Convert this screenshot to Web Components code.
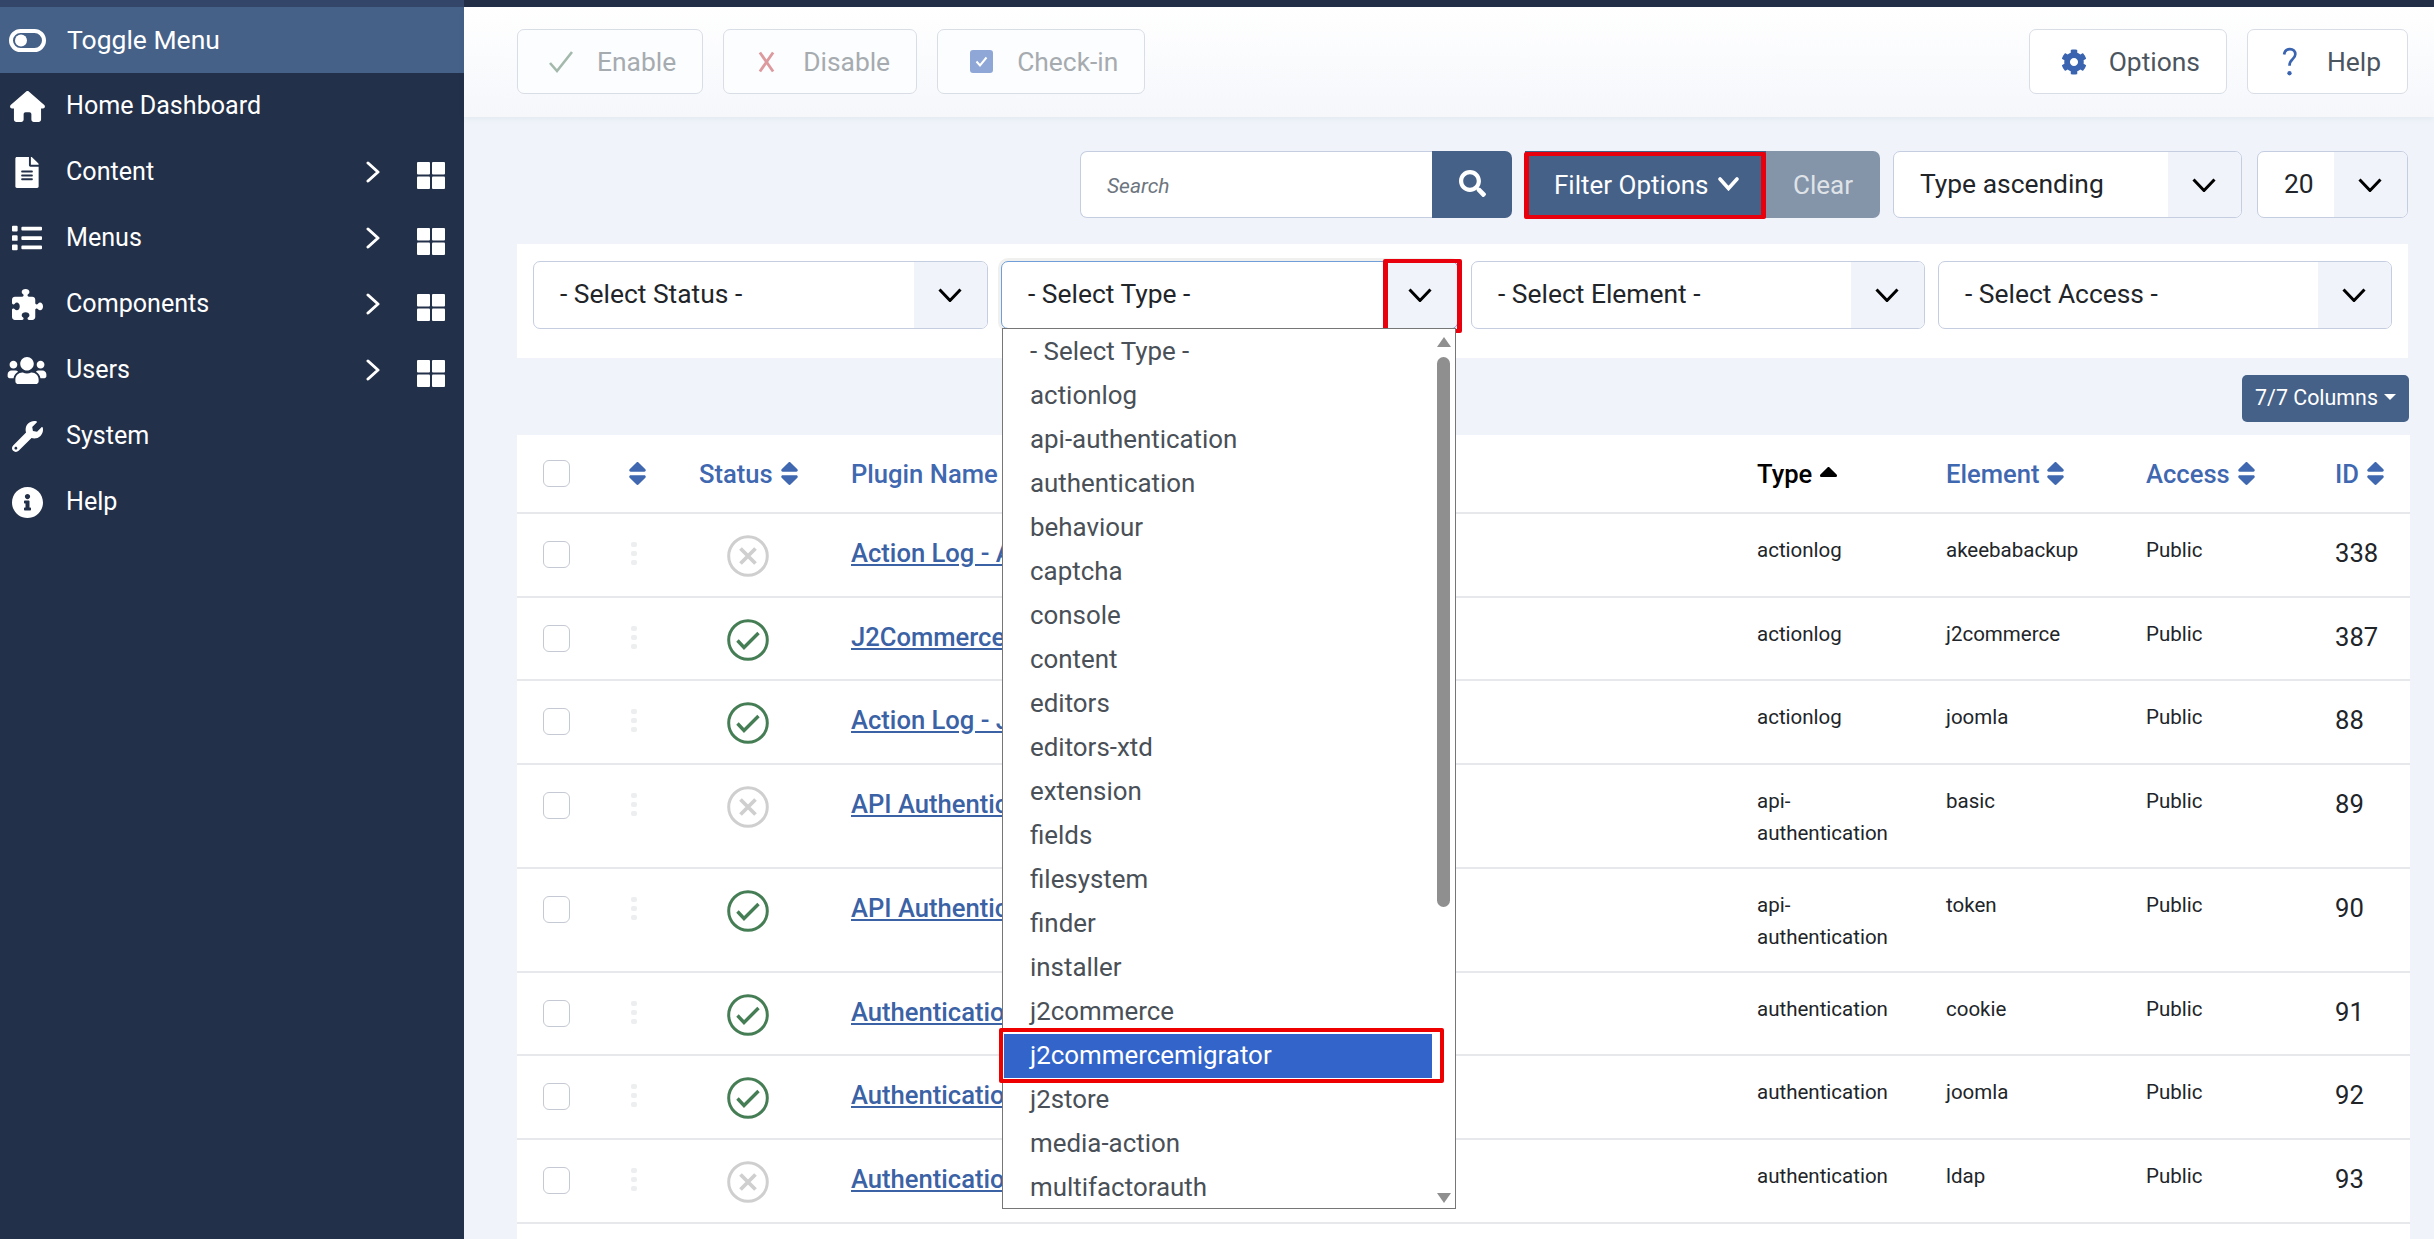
<!DOCTYPE html>
<html lang="en">
<head>
<meta charset="utf-8">
<title>Plugins</title>
<style>
  html, body { margin: 0; height: 1239px; overflow: hidden; background: #f0f4fa; font-family: Roboto, "Noto Sans", sans-serif; }
</style>
</head>
<body>
<app-shell>
  <app-sidebar slot="side">
    <side-item icon="toggle" active>Toggle Menu</side-item>
    <side-item icon="home">Home Dashboard</side-item>
    <side-item icon="file" expand>Content</side-item>
    <side-item icon="list" expand>Menus</side-item>
    <side-item icon="puzzle" expand>Components</side-item>
    <side-item icon="users" expand>Users</side-item>
    <side-item icon="wrench">System</side-item>
    <side-item icon="info">Help</side-item>
  </app-sidebar>

  <tool-bar>
    <tool-button slot="left" icon="check" disabled>Enable</tool-button>
    <tool-button slot="left" icon="times" disabled>Disable</tool-button>
    <tool-button slot="left" icon="checkbox" disabled>Check-in</tool-button>
    <tool-button slot="right" icon="cog">Options</tool-button>
    <tool-button slot="right" icon="question">Help</tool-button>
  </tool-bar>

  <search-tools></search-tools>

  <filter-panel>
    <select-box style="width:455px">- Select Status -</select-box>
    <select-box style="width:457px" focused>- Select Type -<type-listbox slot="list"></type-listbox></select-box>
    <select-box style="width:454px">- Select Element -</select-box>
    <select-box style="width:454px">- Select Access -</select-box>
  </filter-panel>

  <columns-bar>7/7 Columns</columns-bar>

  <!-- names stop where the open dropdown covers them -->
  <plugin-table>
    <plugin-row name="Action Log - A" type="actionlog" element="akeebabackup" num="338"></plugin-row>
    <plugin-row on name="J2Commerce" type="actionlog" element="j2commerce" num="387"></plugin-row>
    <plugin-row on name="Action Log - J" type="actionlog" element="joomla" num="88"></plugin-row>
    <plugin-row name="API Authentic" type="api-authentication" element="basic" num="89"></plugin-row>
    <plugin-row on name="API Authentic" type="api-authentication" element="token" num="90"></plugin-row>
    <plugin-row on name="Authenticatio" type="authentication" element="cookie" num="91"></plugin-row>
    <plugin-row on name="Authenticatio" type="authentication" element="joomla" num="92"></plugin-row>
    <plugin-row name="Authenticatio" type="authentication" element="ldap" num="93"></plugin-row>
  </plugin-table>
</app-shell>

<script>
const ICONS = {
  home: ['0 0 576 512', 'M575.8 255.5c0 18-15 32.1-32 32.1h-32l.7 160.2c0 2.7-.2 5.4-.5 8.1V472c0 22.1-17.9 40-40 40H456c-1.1 0-2.2 0-3.300-.1c-1.400 .1-2.800 .1-4.200 .1H416 392c-22.100 0-40-17.900-40-40V448 384c0-17.700-14.300-32-32-32H256c-17.700 0-32 14.300-32 32v64 24c0 22.100-17.900 40-40 40H160 128.100c-1.500 0-3-.1-4.500-.2c-1.200 .1-2.400 .2-3.600 .2H104c-22.100 0-40-17.900-40-40V360c0-.9 0-1.900 .1-2.800V287.600H32c-18 0-32-14-32-32.100c0-9 3-17 10-24L266.400 8c7-7 15-8 22-8s15 2 21 7L564.800 231.500c8 7 12 15 11 24z'],
  file: ['0 0 384 512', 'M224 136V0H24C10.7 0 0 10.7 0 24v464c0 13.3 10.7 24 24 24h336c13.3 0 24-10.7 24-24V160H248c-13.2 0-24-10.8-24-24zm64 236c0 6.6-5.4 12-12 12H108c-6.6 0-12-5.4-12-12v-8c0-6.6 5.4-12 12-12h168c6.6 0 12 5.4 12 12v8zm0-64c0 6.6-5.4 12-12 12H108c-6.6 0-12-5.4-12-12v-8c0-6.6 5.4-12 12-12h168c6.6 0 12 5.4 12 12v8zm0-72v8c0 6.6-5.4 12-12 12H108c-6.6 0-12-5.4-12-12v-8c0-6.6 5.4-12 12-12h168c6.6 0 12 5.4 12 12zm96-114.1v6.1H256V0h6.1c6.4 0 12.5 2.5 17 7l97.9 98c4.5 4.5 7 10.6 7 16.9z'],
  list: ['0 0 512 512', 'M80 368H16a16 16 0 0 0-16 16v64a16 16 0 0 0 16 16h64a16 16 0 0 0 16-16v-64a16 16 0 0 0-16-16zm0-320H16A16 16 0 0 0 0 64v64a16 16 0 0 0 16 16h64a16 16 0 0 0 16-16V64a16 16 0 0 0-16-16zm0 160H16a16 16 0 0 0-16 16v64a16 16 0 0 0 16 16h64a16 16 0 0 0 16-16v-64a16 16 0 0 0-16-16zm416 176H176a16 16 0 0 0-16 16v32a16 16 0 0 0 16 16h320a16 16 0 0 0 16-16v-32a16 16 0 0 0-16-16zm0-320H176a16 16 0 0 0-16 16v32a16 16 0 0 0 16 16h320a16 16 0 0 0 16-16V80a16 16 0 0 0-16-16zm0 160H176a16 16 0 0 0-16 16v32a16 16 0 0 0 16 16h320a16 16 0 0 0 16-16v-32a16 16 0 0 0-16-16z'],
  puzzle: ['0 0 512 512', 'M192 104.8c0-9.2-5.800-17.300-13.200-22.800C167.200 73.300 160 61.300 160 48c0-26.500 28.700-48 64-48s64 21.500 64 48c0 13.300-7.200 25.300-18.800 34c-7.400 5.500-13.200 13.600-13.200 22.800c0 12.800 10.400 23.200 23.200 23.200H336c26.500 0 48 21.500 48 48v56.800c0 12.800 10.400 23.200 23.200 23.200c9.200 0 17.300-5.800 22.800-13.200c8.700-11.600 20.700-18.800 34-18.800c26.500 0 48 28.700 48 64s-21.500 64-48 64c-13.300 0-25.300-7.200-34-18.800c-5.500-7.400-13.600-13.200-22.800-13.200c-12.800 0-23.200 10.400-23.200 23.200V464c0 26.500-21.500 48-48 48H279.200c-12.800 0-23.200-10.400-23.200-23.200c0-9.200 5.800-17.300 13.200-22.800c11.600-8.700 18.800-20.700 18.800-34c0-26.500-28.700-48-64-48s-64 21.500-64 48c0 13.300 7.200 25.300 18.800 34c7.400 5.500 13.200 13.600 13.200 22.800c0 12.800-10.400 23.200-23.200 23.200H48c-26.500 0-48-21.500-48-48V343.200C0 330.400 10.400 320 23.200 320c9.200 0 17.300 5.800 22.800 13.200C54.700 344.800 66.700 352 80 352c26.500 0 48-28.700 48-64s-21.500-64-48-64c-13.300 0-25.300 7.200-34 18.800C40.500 250.200 32.400 256 23.200 256C10.400 256 0 245.600 0 232.800V176c0-26.500 21.500-48 48-48H168.800c12.800 0 23.200-10.400 23.200-23.200z'],
  users: ['0 0 640 512', 'M96 224c35.3 0 64-28.7 64-64s-28.7-64-64-64-64 28.7-64 64 28.7 64 64 64zm448 0c35.3 0 64-28.7 64-64s-28.7-64-64-64-64 28.7-64 64 28.7 64 64 64zm32 32h-64c-17.6 0-33.5 7.1-45.1 18.6 40.3 22.1 68.9 62 75.1 109.4h66c17.7 0 32-14.3 32-32v-32c0-35.3-28.7-64-64-64zm-256 0c61.9 0 112-50.1 112-112S381.9 32 320 32 208 82.1 208 144s50.1 112 112 112zm76.8 32h-8.3c-20.8 10-43.9 16-68.5 16s-47.6-6-68.5-16h-8.3C179.6 288 128 339.6 128 403.2V432c0 26.5 21.5 48 48 48h288c26.5 0 48-21.5 48-48v-28.8c0-63.6-51.6-115.2-115.2-115.2zm-223.7-13.4C161.5 263.1 145.6 256 128 256H64c-35.3 0-64 28.7-64 64v32c0 17.7 14.3 32 32 32h65.9c6.3-47.4 34.9-87.3 75.2-109.4z'],
  wrench: ['0 0 512 512', 'M507.73 109.1c-2.24-9.03-13.54-12.09-20.12-5.51l-74.36 74.36-67.88-11.31-11.31-67.88 74.36-74.36c6.62-6.62 3.43-17.9-5.66-20.16-47.38-11.74-99.55.91-136.58 37.93-39.64 39.64-50.55 97.1-34.05 147.2L18.74 402.76c-24.99 24.99-24.99 65.51 0 90.5 24.99 24.99 65.51 24.99 90.5 0l213.21-213.21c50.12 16.71 107.47 5.68 147.37-34.22 37.07-37.07 49.7-89.32 37.91-136.73zM64 472c-13.25 0-24-10.75-24-24 0-13.26 10.75-24 24-24s24 10.74 24 24c0 13.25-10.75 24-24 24z'],
  info: ['8 8 496 496', 'M256 8C119.043 8 8 119.083 8 256c0 136.997 111.043 248 248 248s248-111.003 248-248C504 119.083 392.957 8 256 8zm0 110c23.196 0 42 18.804 42 42s-18.804 42-42 42-42-18.804-42-42 18.804-42 42-42zm56 254c0 6.627-5.373 12-12 12h-88c-6.627 0-12-5.373-12-12v-24c0-6.627 5.373-12 12-12h12v-64h-12c-6.627 0-12-5.373-12-12v-24c0-6.627 5.373-12 12-12h64c6.627 0 12 5.373 12 12v100h12c6.627 0 12 5.373 12 12v24z'],
  search: ['0 0 512 512', 'M505 442.7L405.3 343c-4.5-4.5-10.6-7-17-7H372c27.6-35.3 44-79.7 44-128C416 93.1 322.9 0 208 0S0 93.1 0 208s93.1 208 208 208c48.3 0 92.7-16.4 128-44v16.3c0 6.4 2.5 12.5 7 17l99.7 99.7c9.4 9.4 24.6 9.4 33.9 0l28.3-28.3c9.4-9.4 9.4-24.6.1-34zM208 336c-70.7 0-128-57.2-128-128 0-70.7 57.2-128 128-128 70.7 0 128 57.2 128 128 0 70.7-57.2 128-128 128z'],
  cog: ['0 0 512 512', 'M487.4 315.7l-42.6-24.6c4.3-23.2 4.3-47 0-70.2l42.6-24.6c4.9-2.8 7.1-8.6 5.5-14-11.1-35.6-30-67.8-54.7-94.6-3.8-4.1-10-5.1-14.8-2.3L380.8 110c-17.9-15.4-38.5-27.3-60.8-35.1V25.8c0-5.6-3.9-10.5-9.4-11.7-36.7-8.2-74.3-7.8-109.2 0-5.5 1.2-9.4 6.1-9.4 11.7V75c-22.2 7.9-42.8 19.8-60.8 35.1L88.7 85.5c-4.9-2.8-11-1.9-14.8 2.3-24.7 26.7-43.6 58.9-54.7 94.6-1.7 5.4.6 11.2 5.5 14L67.3 221c-4.3 23.2-4.3 47 0 70.2l-42.6 24.6c-4.9 2.8-7.1 8.6-5.5 14 11.1 35.6 30 67.8 54.7 94.6 3.8 4.1 10 5.1 14.8 2.3l42.6-24.6c17.9 15.4 38.5 27.3 60.8 35.1v49.2c0 5.6 3.9 10.5 9.4 11.7 36.7 8.2 74.3 7.8 109.2 0 5.5-1.2 9.4-6.1 9.4-11.7v-49.2c22.2-7.9 42.8-19.8 60.8-35.1l42.6 24.6c4.9 2.8 11 1.9 14.8-2.3 24.7-26.7 43.6-58.9 54.7-94.6 1.5-5.5-.7-11.3-5.6-14.1zM256 336c-44.1 0-80-35.9-80-80s35.9-80 80-80 80 35.9 80 80-35.9 80-80 80z'],
  sort: ['17 57 286 398', 'M41 288h238c21.4 0 32.1 25.9 17 41L177 448c-9.4 9.4-24.6 9.4-33.9 0L24 329c-15.1-15.1-4.4-41 17-41zm255-105L177 64c-9.4-9.4-24.6-9.4-33.9 0L24 183c-15.1 15.1-4.4 41 17 41h238c21.4 0 32.1-25.9 17-41z'],
  sortup: ['17 57 286 167', 'M296 183L177 64c-9.4-9.4-24.6-9.4-33.9 0L24 183c-15.1 15.1-4.4 41 17 41h238c21.4 0 32.1-25.9 17-41z']
};

const DRAWN = {
  toggle: `<svg viewBox="0 0 37 23"><rect x="2" y="2" width="33" height="19" rx="9.5" fill="none" stroke="currentColor" stroke-width="4"/><circle cx="12" cy="11.5" r="6" fill="currentColor"/></svg>`,
  grid: `<svg viewBox="0 0 28 27" fill="currentColor"><rect width="13" height="12.500" rx="1"/><rect x="15" width="13" height="12.500" rx="1"/><rect y="14.500" width="13" height="12.500" rx="1"/><rect x="15" y="14.500" width="13" height="12.500" rx="1"/></svg>`,
  'chev-right': `<svg viewBox="0 0 14 22"><path d="M2 2l10 9L2 20" fill="none" stroke="currentColor" stroke-width="3" stroke-linecap="round" stroke-linejoin="round"/></svg>`,
  'chev-down': `<svg viewBox="0 0 24 14"><path d="M1.500 1.500L12 12.500 22.500 1.500" fill="none" stroke="currentColor" stroke-width="3"/></svg>`,
  'chev-bold': `<svg viewBox="0 0 21 14"><path d="M2 2l8.500 9.500L19 2" fill="none" stroke="currentColor" stroke-width="3.600" stroke-linecap="round"/></svg>`,
  check: `<svg viewBox="0 0 24 24"><path d="M1 13l7 8L23 2" fill="none" stroke="currentColor" stroke-width="2.600"/></svg>`,
  times: `<svg viewBox="0 0 18 24"><path d="M2 2l14 20M16 2L2 22" fill="none" stroke="currentColor" stroke-width="3"/></svg>`,
  checkbox: `<svg viewBox="0 0 23 23"><rect width="23" height="23" rx="3" fill="currentColor"/><path d="M6.500 11.500l3.500 4 6.500-8" fill="none" stroke="#fff" stroke-width="2"/></svg>`,
  question: `<svg viewBox="0 0 18 35"><path d="M2.500 8.500C3 4.500 5.500 2 9.500 2c4 0 6.500 2.600 6.500 6.300 0 3-1.400 4.400-3.600 6.300C10 16.700 9 18.300 9 22" fill="none" stroke="currentColor" stroke-width="3.200"/><circle cx="9" cy="31" r="2.600" fill="currentColor"/></svg>`,
  'status-on': `<svg viewBox="0 0 42 42"><circle cx="21" cy="21" r="19.300" fill="none" stroke="currentColor" stroke-width="3"/><path d="M10.500 21.500l6.500 7L31.500 14" fill="none" stroke="currentColor" stroke-width="3.400"/></svg>`,
  'status-off': `<svg viewBox="0 0 42 42"><circle cx="21" cy="21" r="19.300" fill="none" stroke="currentColor" stroke-width="3"/><path d="M13.500 13.500l15 15M28.500 13.500l-15 15" fill="none" stroke="currentColor" stroke-width="3.800"/></svg>`,
  dots: `<svg viewBox="0 0 6 23" fill="currentColor"><rect width="6" height="5" rx="2"/><rect y="9" width="6" height="5" rx="2"/><rect y="18" width="6" height="5" rx="2"/></svg>`
};

class AppIcon extends HTMLElement {
  static get observedAttributes() { return ['name']; }
  constructor() {
    super();
    this.attachShadow({ mode: 'open' });
  }
  attributeChangedCallback() { this.render(); }
  connectedCallback() { this.render(); }
  render() {
    const name = this.getAttribute('name');
    const css = `<style>:host{display:inline-flex;line-height:0;flex:none} svg{width:100%;height:100%;display:block}</style>`;
    let svg = DRAWN[name] || '';
    if (ICONS[name]) {
      svg = `<svg viewBox="${ICONS[name][0]}" fill="currentColor"><path d="${ICONS[name][1]}"/></svg>`;
    }
    this.shadowRoot.innerHTML = css + svg;
  }
}
customElements.define('app-icon', AppIcon);

const shellTpl = document.createElement('template');
shellTpl.innerHTML = `
<style>
  :host { display: block; height: 1239px; overflow: hidden; }
  .top { height: 7px; background: linear-gradient(90deg, #34456a 464px, #232f47 464px); }
  .body { display: flex; height: 1232px; }
  main { flex: 1; min-width: 0; padding: 0 26px 0 53px; background: #f0f4fa; }
</style>
<div class="top"></div>
<div class="body">
  <slot name="side"></slot>
  <main><slot></slot></main>
</div>`;
class AppShell extends HTMLElement {
  constructor() {
    super();
    this.attachShadow({ mode: 'open' }).appendChild(shellTpl.content.cloneNode(true));
  }
}
customElements.define('app-shell', AppShell);

const sidebarTpl = document.createElement('template');
sidebarTpl.innerHTML = `
<style>
  :host { display: block; width: 464px; flex: none; background: #233049; color: #fff; }
</style>
<slot></slot>`;
class AppSidebar extends HTMLElement {
  constructor() {
    super();
    this.attachShadow({ mode: 'open' }).appendChild(sidebarTpl.content.cloneNode(true));
  }
}
customElements.define('app-sidebar', AppSidebar);

const sideItemTpl = document.createElement('template');
sideItemTpl.innerHTML = `
<style>
  :host { display: flex; align-items: center; height: 66px; font-size: 25.100px; }
  :host([active]) { background: #456188; font-size: 26.500px; }
  .ico { width: 66px; flex: none; display: flex; justify-content: center; padding-right: 12px; box-sizing: border-box; }
  :host([active]) .ico { width: 67px; padding-right: 13px; }
  .label { flex: 1; padding-bottom: 1px; }
  .chev { width: 14px; height: 22px; margin-right: 37px; }
  .grid { width: 28px; height: 27px; margin-right: 19px; margin-top: 7px; }
</style>
<div class="ico"></div>
<div class="label"><slot></slot></div>`;
const SIDE_SIZES = { toggle: [37, 23], home: [35, 31], file: [24, 31], list: [30, 30], puzzle: [31, 31], users: [40, 31], wrench: [31, 31], info: [31, 31] };
class SideItem extends HTMLElement {
  constructor() {
    super();
    this.attachShadow({ mode: 'open' }).appendChild(sideItemTpl.content.cloneNode(true));
  }
  connectedCallback() {
    const name = this.getAttribute('icon');
    const [w, h] = SIDE_SIZES[name];
    this.shadowRoot.querySelector('.ico').innerHTML = `<app-icon name="${name}" style="width:${w}px;height:${h}px"></app-icon>`;
    if (this.hasAttribute('expand') && !this.shadowRoot.querySelector('.chev')) {
      this.shadowRoot.querySelector('.label').insertAdjacentHTML('afterend', `<app-icon class="chev" name="chev-right"></app-icon><app-icon class="grid" name="grid"></app-icon>`);
    }
  }
}
customElements.define('side-item', SideItem);

const toolBarTpl = document.createElement('template');
toolBarTpl.innerHTML = `
<style>
  :host { display: flex; justify-content: space-between; align-items: flex-start; box-sizing: border-box; height: 110px;
    margin: 0 -26px 0 -53px; padding: 22px 26px 0 53px; background: linear-gradient(#fff, #f5f7fb); box-shadow: 0 2px 6px rgba(30,50,90,.06); }
  .group { display: flex; gap: 20px; }
</style>
<div class="group"><slot name="left"></slot></div>
<div class="group"><slot name="right"></slot></div>`;
class ToolBar extends HTMLElement {
  constructor() {
    super();
    this.attachShadow({ mode: 'open' }).appendChild(toolBarTpl.content.cloneNode(true));
  }
}
customElements.define('tool-bar', ToolBar);

const TOOL_ICONS = {
  check: ['#a3b9ab', 24, 24, 0], times: ['#dc9a9e', 17, 24, 3], checkbox: ['#8fa7d6', 23, 23, 1],
  cog: ['#3a64b0', 26, 34, 0], question: ['#3a64b0', 15, 34, 3]
};
const toolBtnTpl = document.createElement('template');
toolBtnTpl.innerHTML = `
<style>
  :host { display: flex; align-items: center; box-sizing: border-box; height: 65px; padding: 0 26px 0 31px; background: #fff; border: 1px solid #d9dde6;
    border-radius: 7px; font-size: 26.400px; color: #4b5560; }
  :host([disabled]) { color: #a6abb0; background: #fcfdfe; }
  .ico { width: 48px; flex: none; display: flex; }
</style>
<div class="ico"></div><slot></slot>`;
class ToolButton extends HTMLElement {
  constructor() {
    super();
    this.attachShadow({ mode: 'open' }).appendChild(toolBtnTpl.content.cloneNode(true));
  }
  connectedCallback() {
    const name = this.getAttribute('icon');
    const [c, w, h, ml] = TOOL_ICONS[name];
    this.shadowRoot.querySelector('.ico').innerHTML = `<app-icon name="${name}" style="color:${c};width:${w}px;height:${h}px;margin-left:${ml}px"></app-icon>`;
  }
}
customElements.define('tool-button', ToolButton);

const selectTpl = document.createElement('template');
selectTpl.innerHTML = `
<style>
  :host { display: flex; position: relative; box-sizing: border-box; height: 68px; background: #fff; border: 1px solid #c5cde0; border-radius: 7px;
    font-size: 26.400px; color: #212529; flex: none; }
  :host([focused]) { border-color: #6f9ed8; box-shadow: 0 0 0 3px #f0f0ee; }
  .val { flex: 1; display: flex; align-items: center; padding-left: 26px; padding-bottom: 2px; white-space: nowrap; min-width: 0; }
  .arrow { width: 73px; flex: none; background: #f0f4fa; display: flex; align-items: center; justify-content: center; border-radius: 0 6px 6px 0; color: #000; }
  .arrow app-icon { width: 24px; height: 14px; margin-right: 2px; }
  :host([focused]) .mark { display: block; }
  .mark { display: none; position: absolute; top: -3px; right: -5px; width: 79px; height: 74px; box-sizing: border-box; border: solid #e8000c; border-width: 4px 5px; border-radius: 2px; }
</style>
<div class="val"><slot></slot></div>
<div class="arrow"><app-icon name="chev-down"></app-icon></div>
<div class="mark"></div>
<slot name="list"></slot>`;
class SelectBox extends HTMLElement {
  constructor() {
    super();
    this.attachShadow({ mode: 'open' }).appendChild(selectTpl.content.cloneNode(true));
  }
}
customElements.define('select-box', SelectBox);

const searchTpl = document.createElement('template');
searchTpl.innerHTML = `
<style>
  :host { display: flex; justify-content: flex-end; align-items: stretch; height: 67px; margin-top: 34px; }
  .input { width: 352px; box-sizing: border-box; background: #fff; border: 1px solid #c5cde0; border-right: 0; border-radius: 7px 0 0 7px; display: flex; align-items: center;
    padding: 2px 0 0 26px; font-size: 21px; font-style: italic; color: #6d757e; }
  .go { width: 80px; background: #456188; color: #fff; border-radius: 0 7px 7px 0; display: flex; align-items: center; justify-content: center; margin-right: 13px; }
  .go app-icon { width: 27px; height: 27px; margin-bottom: 2px; }
  .filter { position: relative; width: 241px; box-sizing: border-box; background: #456188; color: #fff; font-size: 26px; display: flex; align-items: center; padding: 0 0 0 29px; gap: 9px; }
  .filter::after { content: ""; position: absolute; inset: 1px 0 -1px -1px; border: solid #e8000c; border-width: 4px 5px; border-radius: 2px; }
  .filter app-icon { width: 21px; height: 14px; margin-bottom: 2px; }
  .clear { width: 114px; box-sizing: border-box; background: #8494a9; color: #dfe3e8; font-size: 26px; border-radius: 0 7px 7px 0; display: flex; align-items: center; justify-content: center; margin-right: 13px; }
  select-box { height: 67px; }
  .sort { width: 349px; margin-right: 15px; }
  .limit { width: 151px; }
</style>
<div class="input">Search</div>
<div class="go"><app-icon name="search"></app-icon></div>
<div class="filter">Filter Options<app-icon name="chev-bold"></app-icon></div>
<div class="clear">Clear</div>
<select-box class="sort">Type ascending</select-box>
<select-box class="limit">20</select-box>`;
class SearchTools extends HTMLElement {
  constructor() {
    super();
    this.attachShadow({ mode: 'open' }).appendChild(searchTpl.content.cloneNode(true));
  }
}
customElements.define('search-tools', SearchTools);

const panelTpl = document.createElement('template');
panelTpl.innerHTML = `
<style>
  :host { display: flex; gap: 13px; box-sizing: border-box; height: 114px; margin-top: 26px; padding: 17px 16px; background: #fff; }
</style>
<slot></slot>`;
class FilterPanel extends HTMLElement {
  constructor() {
    super();
    this.attachShadow({ mode: 'open' }).appendChild(panelTpl.content.cloneNode(true));
  }
}
customElements.define('filter-panel', FilterPanel);

const TYPE_ITEMS = ['- Select Type -', 'actionlog', 'api-authentication', 'authentication', 'behaviour', 'captcha', 'console', 'content', 'editors', 'editors-xtd', 'extension', 'fields', 'filesystem', 'finder', 'installer', 'j2commerce', 'j2commercemigrator', 'j2store', 'media-action', 'multifactorauth'];
const listTpl = document.createElement('template');
listTpl.innerHTML = `
<style>
  :host { display: flex; position: absolute; z-index: 5; top: 66px; left: 0; width: 454px; height: 881px; box-sizing: border-box; padding-top: 1px; background: #fff; border: 1px solid #767676; color: #495057; font-size: 25.900px; }
  ul { list-style: none; margin: 0; padding: 0; flex: 1; }
  li { height: 44px; line-height: 42px; padding-left: 27px; box-sizing: border-box; }
  li.sel { position: relative; background: #3364c9; color: #fff; margin-left: 1px; padding-left: 26px; }
  li.sel::after { content: ""; position: absolute; left: -5px; right: -12px; top: -6px; bottom: -5px; border: solid #ee0000; border-width: 4px 4px; border-radius: 2px; }
  .bar { width: 23px; flex: none; display: flex; flex-direction: column; align-items: center; padding: 7px 0 5px 0; box-sizing: border-box; }
  .up, .down { width: 0; height: 0; border: 7px solid transparent; border-top: 0; border-bottom: 10px solid #8f8f8f; }
  .down { border-bottom: 0; border-top: 10px solid #8f8f8f; margin-top: auto; }
  .thumb { width: 13px; height: 550px; border-radius: 7px; background: #8f8f8f; margin-top: 10px; }
</style>
<ul></ul>
<div class="bar"><div class="up"></div><div class="thumb"></div><div class="down"></div></div>`;
class TypeListbox extends HTMLElement {
  constructor() {
    super();
    const root = this.attachShadow({ mode: 'open' });
    root.appendChild(listTpl.content.cloneNode(true));
    const ul = root.querySelector('ul');
    TYPE_ITEMS.forEach(t => {
      const li = document.createElement('li');
      li.textContent = t;
      if (t === 'j2commercemigrator') li.className = 'sel';
      ul.appendChild(li);
    });
  }
}
customElements.define('type-listbox', TypeListbox);

const colsTpl = document.createElement('template');
colsTpl.innerHTML = `
<style>
  :host { display: flex; justify-content: flex-end; margin: 17px -1px 13px 0; }
  div { height: 47px; width: 167px; box-sizing: border-box; display: flex; align-items: center; justify-content: center; gap: 6px; background: #456188; color: #fff; font-size: 21.400px; border-radius: 5px; padding-bottom: 2px; }
  i { width: 0; height: 0; border: 6px solid transparent; border-top: 6px solid #fff; border-bottom: 0; margin-bottom: 2px; }
</style>
<div><slot></slot><i></i></div>`;
class ColumnsBar extends HTMLElement {
  constructor() {
    super();
    this.attachShadow({ mode: 'open' }).appendChild(colsTpl.content.cloneNode(true));
  }
}
customElements.define('columns-bar', ColumnsBar);

const tableTpl = document.createElement('template');
tableTpl.innerHTML = `
<style>
  :host { display: block; margin-right: -2px; background: #fff; height: 900px; --cols: 91px 65px 152px 906px 189px 200px 189px 1fr; color: #212529; }
  .head { display: grid; grid-template-columns: var(--cols); align-items: center; box-sizing: border-box; height: 79px; padding: 0 0 0 26px; border-bottom: 2px solid #e6e8eb; font-size: 25.600px; font-weight: 500; color: #3f68b0; }
  .head span { display: flex; align-items: center; gap: 8px; }
  .head app-icon { width: 17px; height: 23px; }
  .box { width: 27px; height: 27px; box-sizing: border-box; border: 1px solid #c5c9d3; border-radius: 6px; background: #fff; }
  .drag { margin-left: -5px; }
  .act { color: #000; }
  .head .act app-icon { height: 10px; margin-top: -4px; color: #000; }
</style>
<div class="head">
  <div class="box"></div>
  <span class="drag"><app-icon name="sort"></app-icon></span>
  <span>Status<app-icon name="sort"></app-icon></span>
  <span>Plugin Name<app-icon name="sort"></app-icon></span>
  <span class="act">Type<app-icon name="sortup"></app-icon></span>
  <span>Element<app-icon name="sort"></app-icon></span>
  <span>Access<app-icon name="sort"></app-icon></span>
  <span>ID<app-icon name="sort"></app-icon></span>
</div>
<slot></slot>`;
class PluginTable extends HTMLElement {
  constructor() {
    super();
    this.attachShadow({ mode: 'open' }).appendChild(tableTpl.content.cloneNode(true));
  }
}
customElements.define('plugin-table', PluginTable);

const rowTpl = document.createElement('template');
rowTpl.innerHTML = `
<style>
  :host { display: grid; grid-template-columns: var(--cols); align-items: start; box-sizing: border-box; min-height: 83.600px; padding: 20px 0 18px 26px; border-bottom: 2px solid #e6e8eb; font-size: 20.500px; line-height: 32px; }
  .box { width: 27px; height: 27px; box-sizing: border-box; border: 1px solid #c5c9d3; border-radius: 6px; background: #fff; margin-top: 7px; }
  .dots { width: 6px; height: 23px; color: #eceef0; margin-top: 8px; margin-left: -3px; display: block; }
  .st { width: 42px; height: 42px; margin: 1px 0 0 28px; display: block; }
  .clip { width: 152px; overflow: hidden; line-height: 38px; }
  a { font-size: 25.600px; line-height: 38px; font-weight: 500; color: #3b62a5; text-decoration: underline; white-space: nowrap; }
  .num { font-size: 25.600px; line-height: 38px; }
  .type { padding-right: 40px; }
</style>
<div class="box"></div>
<app-icon class="dots" name="dots"></app-icon>
<app-icon class="st"></app-icon>
<div class="clip"><a class="name"></a></div>
<div class="type"></div>
<div class="el"></div>
<div>Public</div>
<div class="num"></div>`;
class PluginRow extends HTMLElement {
  constructor() {
    super();
    this.attachShadow({ mode: 'open' }).appendChild(rowTpl.content.cloneNode(true));
  }
  connectedCallback() {
    const r = this.shadowRoot;
    const on = this.hasAttribute('on');
    const st = r.querySelector('.st');
    st.style.color = on ? '#457d54' : '#cfcfcf';
    st.setAttribute('name', on ? 'status-on' : 'status-off');
    r.querySelector('.name').textContent = this.getAttribute('name');
    r.querySelector('.type').textContent = this.getAttribute('type');
    r.querySelector('.el').textContent = this.getAttribute('element');
    r.querySelector('.num').textContent = this.getAttribute('num');
  }
}
customElements.define('plugin-row', PluginRow);
</script>
</body>
</html>
